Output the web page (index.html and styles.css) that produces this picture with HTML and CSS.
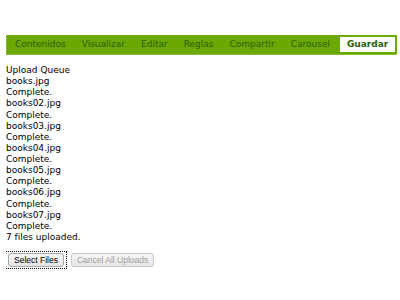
FILE: index.html
```html
<!DOCTYPE html>
<html lang="es">
<head>
  <meta charset="UTF-8">
  <title>Upload</title>
  <link rel="stylesheet" href="styles.css">
</head>
<body>
<ul class="tabs">
  <li><a href="#">Contenidos</a></li>
  <li><a href="#">Visualizar</a></li>
  <li><a href="#">Editar</a></li>
  <li><a href="#">Reglas</a></li>
  <li><a href="#">Compartir</a></li>
  <li><a href="#">Carousel</a></li>
  <li class="active"><a href="#">Guardar</a></li>
</ul>

<div class="queue">
  <div>Upload Queue</div>
  <div>books.jpg</div>
  <div>Complete.</div>
  <div>books02.jpg</div>
  <div>Complete.</div>
  <div>books03.jpg</div>
  <div>Complete.</div>
  <div>books04.jpg</div>
  <div>Complete.</div>
  <div>books05.jpg</div>
  <div>Complete.</div>
  <div>books06.jpg</div>
  <div>Complete.</div>
  <div>books07.jpg</div>
  <div>Complete.</div>
  <div>7 files uploaded.</div>
</div>

<div class="buttons">
  <span class="focus"><button type="button">Select Files</button></span>
  <button type="button" disabled>Cancel All Uploads</button>
</div>
</body>
</html>
```

FILE: styles.css
```css
body {
  margin: 35px 3px 0 6px;
  font-family: "DejaVu Sans", sans-serif;
  font-size: 9px;
  color: #000000;
  background-color: #FFFFFF;
}
.tabs {
  list-style: none;
  margin: 0;
  padding: 0 4px 0 0;
  display: flex;
  align-items: center;
  background-color: #6BA800;
  border-left: 1px solid #86B935;
  border-bottom: 1px solid #86B935;
  height: 19px;
}
.tabs li a {
  display: block;
  padding: 2px 8px;
  font-size: 9px;
  color: #2A6000;
  text-decoration: none;
  line-height: 11px;
}
.tabs li.active {
  margin-left: 2px;
}
.tabs li.active a {
  background-color: #FFFFFF;
  font-weight: bold;
  color: #2A6000;
  padding: 2px 7px;
}
.queue {
  margin-top: 10px;
  line-height: 11.13px;
}
.buttons {
  display: flex;
  align-items: center;
  gap: 4px;
  margin-top: 8px;
}
.focus {
  border: 1px dotted #000000;
  padding: 1px 2px;
  margin-left: -1px;
}
button {
  font-family: "Liberation Sans", Arial, sans-serif;
  font-size: 8.5px;
  height: 14px;
  padding: 0 5px;
  background: linear-gradient(#F6F6F6, #E4E4E4);
  border: 1px solid #A8A8A8;
  border-radius: 3px;
  color: #000000;
}
button:disabled {
  color: #A0A0A0;
  border-color: #C8C8C8;
}
```
